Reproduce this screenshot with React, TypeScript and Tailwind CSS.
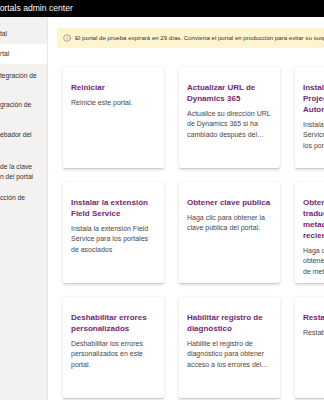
import { Info } from "lucide-react";

const navItems: { lines: string[]; className: string; selected?: boolean }[] = [
  { lines: ["tal"], className: "h-[20px] pt-[5px]" },
  { lines: ["rtal"], className: "h-[20px] pt-[5px]", selected: true },
  { lines: ["tegración de"], className: "h-[30px] pt-[7px]" },
  { lines: ["gración de"], className: "h-[30px] pt-[6px]" },
  { lines: ["ebador del"], className: "h-[32px] pt-[6px]" },
  { lines: ["de la clave", "n del portal"], className: "h-[31px] pt-[6px]" },
  { lines: ["cción de"], className: "h-[30px] pt-[6px]" },
];

const cards = [
  { title: "Reiniciar", text: "Reinicie este portal." },
  {
    title: "Actualizar URL de Dynamics 365",
    text: "Actualice su dirección URL de Dynamics 365 si ha cambiado después del aprovisionamiento del portal.",
  },
  {
    title: "Instalar la extensión Project Service Automation",
    text: "Instala la extensión Project Service Automation para los portales de asociados",
  },
  {
    title: "Instalar la extensión Field Service",
    text: "Instala la extensión Field Service para los portales de asociados",
  },
  {
    title: "Obtener clave pública",
    text: "Haga clic para obtener la clave pública del portal.",
  },
  {
    title: "Obtener las traducciones de metadatos más recientes",
    text: "Haga clic aquí para obtener las traducciones de metadatos más recientes.",
  },
  {
    title: "Deshabilitar errores personalizados",
    text: "Deshabilitar los errores personalizados en este portal.",
  },
  {
    title: "Habilitar registro de diagnóstico",
    text: "Habilite el registro de diagnóstico para obtener acceso a los errores del sitio web.",
  },
  { title: "Restablecer portal", text: "Restablecer el portal." },
];

export default function App() {
  return (
    <div className="flex h-[400px] w-[324px] flex-col overflow-hidden bg-white font-['Liberation_Sans',Arial,sans-serif]">
      <header className="flex h-[17px] shrink-0 items-center overflow-hidden bg-black text-[8.6px] text-white">
        <span className="-ml-[6px] whitespace-nowrap">Portals admin center</span>
      </header>

      <div className="flex min-h-0 flex-1">
        <nav className="w-[48px] shrink-0 overflow-hidden border-r border-[#e8e6e4] bg-[#f3f2f1] pt-[7px] text-[6.7px] leading-[10px] text-[#323130]">
          {navItems.map((item, i) => (
            <div
              key={i}
              className={`${item.className} ${item.selected ? "bg-white" : ""} whitespace-nowrap`}
            >
              {item.lines.map((line) => (
                <div key={line}>{line}</div>
              ))}
            </div>
          ))}
        </nav>

        <main className="min-w-0 flex-1 overflow-hidden pl-[9px] pt-[11px]">
          <div className="flex h-[20px] w-[400px] items-center gap-[4px] bg-[#fff4ce] pl-[6px] text-[6.1px] whitespace-nowrap text-[#323130]">
            <Info size={8} strokeWidth={1.6} className="text-[#605e5c]" />
            <span>
              El portal de prueba expirará en 29 días. Convierta el portal en producción para evitar su suspensión.
            </span>
          </div>

          <div className="mt-[19px] ml-[6px] grid w-max grid-cols-[repeat(3,101px)] gap-x-[15px] gap-y-[14px]">
            {cards.map((card) => (
              <div
                key={card.title}
                className="h-[101px] rounded-[2px] bg-white px-[8px] pt-[15px] shadow-[0_1.6px_3.6px_rgba(0,0,0,0.13),0_0.3px_0.9px_rgba(0,0,0,0.11)]"
              >
                <div className="text-[8px] leading-[11px] font-bold text-[#742774]">{card.title}</div>
                <div className="mt-[4.5px] line-clamp-3 text-[7px] leading-[10.5px] text-[#484644]">
                  {card.text}
                </div>
              </div>
            ))}
          </div>
        </main>
      </div>
    </div>
  );
}
